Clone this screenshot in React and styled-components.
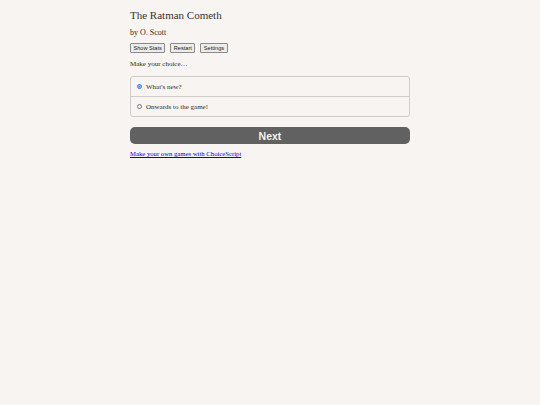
import React, { useState } from 'react'
import styled, { createGlobalStyle } from 'styled-components'

const GlobalStyle = createGlobalStyle`
  html, body {
    margin: 0;
    padding: 0;
    background: #f7f4f1;
  }
  body {
    font-family: "Liberation Serif", "Times New Roman", serif;
    color: #2b2b2b;
    font-size: 8px;
  }
`

const Container = styled.div`
  width: 280px;
  margin: 0 auto;
  padding-top: 9px;
`

const Title = styled.h1`
  margin: 0;
  font-size: 11px;
  font-weight: normal;
  line-height: 13px;
  color: #333;
`

const Author = styled.p`
  margin: 6px 0 0;
  font-size: 8px;
  line-height: 10px;
`

const ButtonBar = styled.div`
  display: flex;
  gap: 5px;
  margin-top: 5px;
`

const SmallButton = styled.button`
  height: 10px;
  padding: 0 2.5px;
  font-family: "Liberation Sans", Arial, sans-serif;
  font-size: 5.6px;
  line-height: 8px;
  color: #222;
  background: #ececec;
  border: 1px solid #8a8a8a;
  border-radius: 1px;
  cursor: pointer;
`

const Prompt = styled.p`
  margin: 6px 0 0;
  font-size: 7px;
  line-height: 10px;
`

const ChoiceList = styled.div`
  margin-top: 7px;
  border: 1px solid #cfcbc8;
  border-radius: 3px;
  overflow: hidden;
`

const ChoiceRow = styled.label`
  display: flex;
  align-items: center;
  height: 19px;
  padding-left: 6px;
  font-size: 7px;
  cursor: pointer;
  border-top: ${p => (p.first ? 'none' : '1px solid #cfcbc8')};
`

const Radio = styled.span`
  box-sizing: border-box;
  width: 5px;
  height: 5px;
  margin-right: 4px;
  border-radius: 50%;
  border: ${p => (p.checked ? '1px solid #3b82f6' : '0.6px solid #777')};
  background: ${p => (p.checked ? '#2f7fe8' : '#fff')};
  box-shadow: ${p => (p.checked ? 'inset 0 0 0 0.5px #fff' : 'none')};
`

const NextButton = styled.button`
  display: block;
  width: 100%;
  height: 17px;
  margin-top: 10px;
  border: none;
  border-radius: 5px;
  background: #616161;
  color: #f2f2f2;
  font-family: "Liberation Sans", Arial, sans-serif;
  font-weight: bold;
  font-size: 10.5px;
  line-height: 17px;
  cursor: pointer;
`

const Footer = styled.p`
  margin: 5px 0 0;
  font-size: 6.7px;
  line-height: 10px;

  a {
    color: #0000ee;
  }
`

const choices = ["What's new?", 'Onwards to the game!']

export default function App() {
  const [picked, setPicked] = useState(0)

  return (
    <>
      <GlobalStyle />
      <Container>
        <Title>The Ratman Cometh</Title>
        <Author>by O. Scott</Author>
        <ButtonBar>
          <SmallButton>Show Stats</SmallButton>
          <SmallButton>Restart</SmallButton>
          <SmallButton>Settings</SmallButton>
        </ButtonBar>
        <Prompt>Make your choice…</Prompt>
        <ChoiceList>
          {choices.map((c, i) => (
            <ChoiceRow key={c} first={i === 0} onClick={() => setPicked(i)}>
              <Radio checked={picked === i} />
              {c}
            </ChoiceRow>
          ))}
        </ChoiceList>
        <NextButton>Next</NextButton>
        <Footer>
          <a href="#">Make your own games with ChoiceScript</a>
        </Footer>
      </Container>
    </>
  )
}
